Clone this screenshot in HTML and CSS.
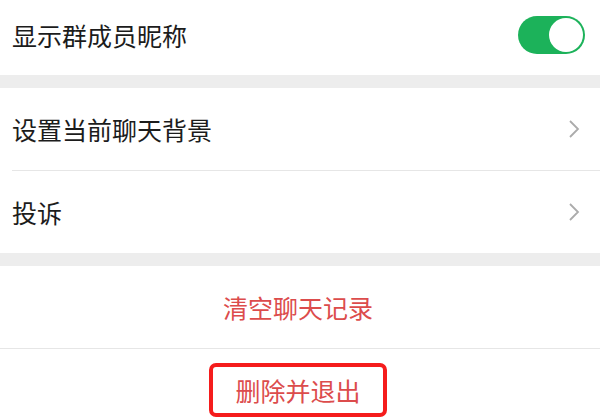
FILE: index.html
```html
<!DOCTYPE html>
<html lang="zh">
<head>
<meta charset="utf-8">
<link rel="stylesheet" href="styles.css">
</head>
<body>
<div class="group">
  <div class="row row-first">
    <span class="label">显示群成员昵称</span>
    <span class="toggle"><span class="knob"></span></span>
  </div>
</div>
<div class="group">
  <div class="row">
    <span class="label">设置当前聊天背景</span>
    <svg class="chev" width="12" height="20" viewBox="0 0 12 20"><path d="M2 2 L10 10 L2 18" fill="none" stroke="#ababab" stroke-width="1.8"/></svg>
  </div>
  <div class="sep"></div>
  <div class="row">
    <span class="label">投诉</span>
    <svg class="chev" width="12" height="20" viewBox="0 0 12 20"><path d="M2 2 L10 10 L2 18" fill="none" stroke="#ababab" stroke-width="1.8"/></svg>
  </div>
</div>
<div class="group group-last">
  <div class="row center">
    <span class="danger">清空聊天记录</span>
  </div>
  <div class="sep full"></div>
  <div class="row center last">
    <span class="danger boxed">删除并退出</span>
  </div>
</div>
</body>
</html>
```
FILE: styles.css
```css
html, body {
  margin: 0;
  padding: 0;
  background: #ededed;
  font-family: "Noto Sans CJK SC", "Noto Sans", sans-serif;
  width: 600px;
  height: 420px;
  overflow: hidden;
}
.group {
  background: #fff;
  margin-bottom: 13px;
}
.group-last {
  margin-bottom: 0;
}
.row {
  height: 82px;
  display: flex;
  align-items: center;
  justify-content: space-between;
  padding: 0 16px 0 12px;
  box-sizing: border-box;
}
.row-first {
  height: 75px;
  padding-right: 15px;
  padding-bottom: 6px;
}
.label {
  font-size: 25px;
  color: #1c1c1c;
}
.toggle {
  width: 67px;
  height: 38px;
  border-radius: 19px;
  background: #1cb25a;
  display: flex;
  align-items: center;
  justify-content: flex-end;
  padding: 2px;
  box-sizing: border-box;
}
.knob {
  width: 34px;
  height: 34px;
  border-radius: 50%;
  background: #fff;
}
.chev {
  margin-right: 4px;
}
.sep {
  height: 1px;
  background: #e6e6e6;
  margin-left: 12px;
}
.sep.full {
  margin-left: 0;
}
.center {
  justify-content: center;
}
.danger {
  font-size: 25px;
  color: #dc4c4c;
}
.last {
  height: 71px;
  align-items: flex-start;
  padding-top: 14px;
}
.boxed {
  border: 4px solid #f51c1c;
  border-radius: 7px;
  padding: 2px 22px;
  line-height: 42px;
}
```
